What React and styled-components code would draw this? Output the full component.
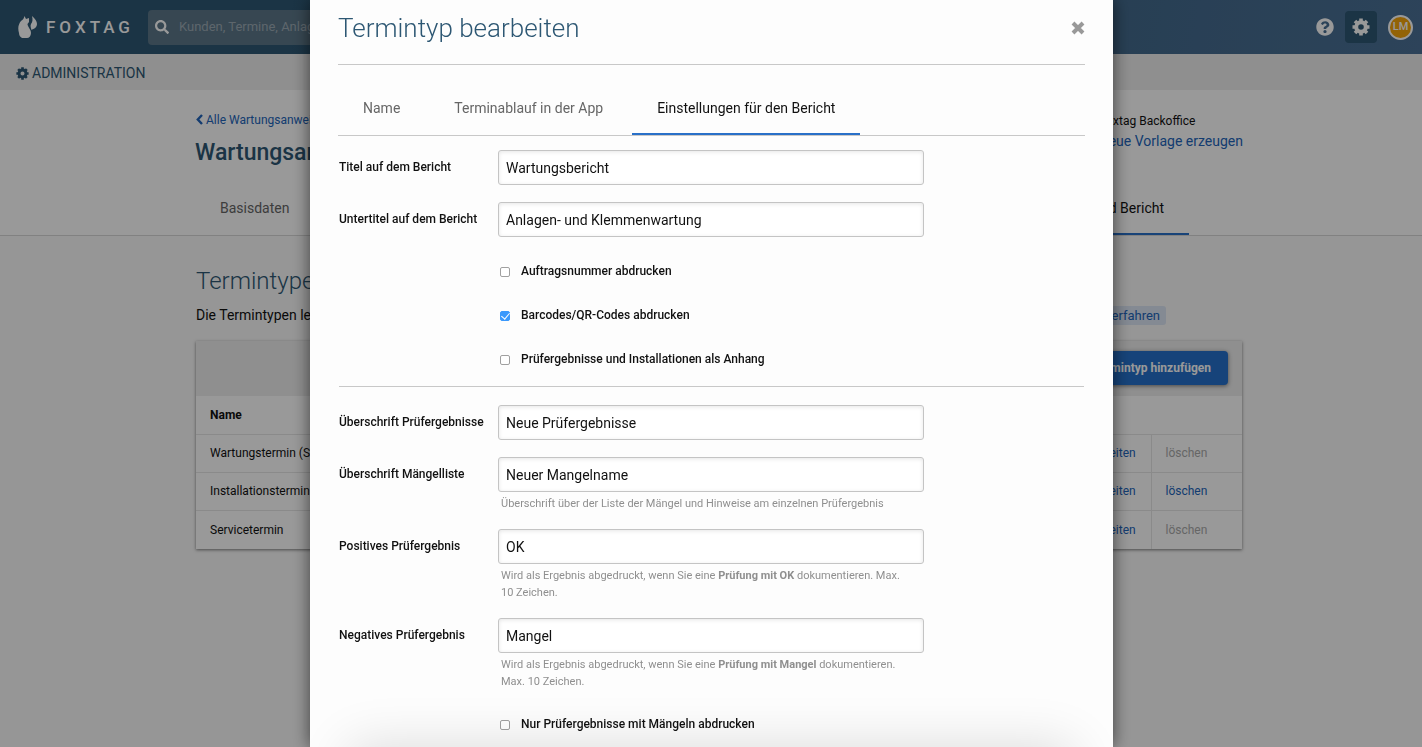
import React from "react";
import styled, { createGlobalStyle } from "styled-components";
import { FaSearch, FaQuestionCircle } from "react-icons/fa";

const GlobalStyle = createGlobalStyle`
  * { box-sizing: border-box; }
  body {
    margin: 0;
    background: #fafafa;
    color: #111;
    font: 14px/20px Roboto, "Liberation Sans", sans-serif;
    overflow: hidden;
  }
  h1, h2, p { margin: 0; }
  a { color: #2265bb; text-decoration: none; }
  button, input { font: inherit; }
`;

const Header = styled.header`
  display: flex;
  align-items: center;
  height: 54px;
  padding: 0 9px 0 18px;
  background: linear-gradient(100deg, #2d5773 20%, #4b7196);
  color: #fff;
`;

const Brand = styled.a`
  display: flex;
  align-items: center;
  gap: 8px;
  width: 130px;
  color: #fff;
  font-size: 17px;
  font-weight: 500;
  letter-spacing: 4px;
`;

const Search = styled.label`
  display: flex;
  align-items: center;
  width: 360px;
  height: 35px;
  padding-left: 7px;
  border-radius: 4px;
  background: #5c7789;
  gap: 10px;
  font-size: 14px;
`;

const SearchInput = styled.input`
  flex: 1;
  min-width: 0;
  border: 0;
  background: transparent;
  outline: 0;
  padding: 0;
  font-size: 13px;
  &::placeholder { color: #9cabb5; opacity: 1; }
`;

const HeaderTools = styled.div`
  display: flex;
  align-items: center;
  gap: 11px;
  margin-left: auto;
`;

const ToolButton = styled.button`
  display: grid;
  place-items: center;
  width: ${(p) => (p.$active ? 32 : 18)}px;
  height: 32px;
  padding: 0;
  border: 0;
  border-radius: 4px;
  background: ${(p) => (p.$active ? "#2d5773" : "transparent")};
  color: #fff;
  font-size: 18px;
`;

const Avatar = styled.button`
  width: 25px;
  height: 25px;
  padding: 0;
  border: 2px solid #fff;
  border-radius: 50%;
  background: #f5a50a;
  color: #fff;
  font-size: 11px;
  font-weight: 500;
  line-height: 20px;
`;

const AdminBar = styled.div`
  display: flex;
  align-items: center;
  gap: 3px;
  height: 36px;
  padding: 2px 16px 0;
  background: #eee;
  color: #2d5773;
`;

const PageHead = styled.section`
  height: 146px;
  padding: 20px 0 0 16px;
  border-bottom: 1px solid #d8d8d8;
  background: #fff;
`;

const PageBody = styled.section`
  padding: 31px 0 40px 16px;
`;

const Container = styled.div`
  width: 100%;
  max-width: 1048px;
  margin: 0 auto;
`;

const BodyContainer = styled(Container)`
  padding: 0 1px;
`;

const Split = styled.div`
  display: flex;
  justify-content: space-between;
`;

const Origin = styled.div`
  padding-top: 1px;
`;

const SmallLine = styled.p`
  font-size: 12px;
  line-height: 20px;
  svg { margin: 0 3px 0 1px; vertical-align: -1px; }
`;

const PageTitle = styled.h1`
  color: #2d5773;
  font-size: 23px;
  font-weight: 500;
  line-height: 46px;
`;

const SectionTitle = styled.h2`
  color: #2d5773;
  font-size: 24px;
  font-weight: 300;
  line-height: 28px;
`;

const Tabs = styled.nav`
  display: flex;
  gap: 4px;
  border-bottom: 1px solid #c8c8c8;
`;

const Tab = styled.a`
  height: 54px;
  padding: 0 25px;
  border-bottom: 2px solid ${(p) => (p.$active ? "#2970c8" : "transparent")};
  color: ${(p) => (p.$active ? "#111" : "#666")};
  line-height: 54px;
`;

const PageTabs = styled(Tabs)`
  justify-content: space-between;
  margin-top: 5px;
  padding-right: 54px;
  border-bottom: 0;
`;

const Intro = styled(Split)`
  align-items: flex-end;
  margin-top: 10px;
  padding-right: 76px;
`;

const LearnMore = styled.a`
  padding: 0 6px;
  border-radius: 3px;
  background: #dce6f5;
  font-size: 13px;
  line-height: 19px;
`;

const Card = styled.div`
  margin-top: 16px;
  background: #fff;
  box-shadow: 0 1px 3px rgba(0, 0, 0, 0.5);
`;

const CardTools = styled.div`
  display: flex;
  justify-content: flex-end;
  height: 55px;
  padding: 10px 14px;
  background: #eee;
`;

const AddButton = styled.button`
  height: 34px;
  padding: 0 17px;
  border: 0;
  border-radius: 4px;
  background: #2671cb;
  box-shadow: 0 1px 4px rgba(0, 0, 0, 0.5);
  color: #fff;
  font-size: 12px;
  font-weight: 700;
`;

const Table = styled.table`
  width: 100%;
  border-collapse: collapse;
  font-size: 12px;
  line-height: 18px;
  th, td {
    height: 38px;
    padding: 0 14px;
    text-align: left;
  }
  td { border-top: 1px solid #e6e6e6; }
  td + td { width: 86px; }
  td + td + td { width: 91px; border-left: 1px solid #e6e6e6; }
  tr:last-child td { height: 39px; }
`;

const Muted = styled.span`
  color: #aaa;
`;

const Overlay = styled.div`
  position: fixed;
  inset: 0;
  display: flex;
  justify-content: center;
  padding-left: 1px;
  background: rgba(0, 0, 0, 0.4);
`;

const Modal = styled.section`
  position: relative;
  width: 100%;
  max-width: 803px;
  padding: 0 28px;
  overflow: hidden;
  background: #fdfdfd;
  box-shadow: 0 0 16px rgba(0, 0, 0, 0.6);
`;

const ModalHead = styled.header`
  display: flex;
  align-items: center;
  justify-content: space-between;
  height: 65px;
  padding-bottom: 9px;
  border-bottom: 1px solid #c8c8c8;
  margin-bottom: 16px;
`;

const ModalTitle = styled.h2`
  color: #2d5773;
  font-size: 26px;
  font-weight: 300;
  line-height: 32px;
`;

const CloseButton = styled.button`
  display: grid;
  padding: 0;
  border: 0;
  background: none;
  color: #999;
`;

const Form = styled.form`
  padding-top: 14px;
`;

const Field = styled.div`
  display: grid;
  grid-template-columns: 160px 426px;
  align-items: start;
  margin-bottom: 17px;
`;

const FieldLabel = styled.label`
  padding-left: 1px;
  font-size: 12px;
  font-weight: 500;
  line-height: 34px;
  white-space: nowrap;
`;

const TextInput = styled.input`
  width: 100%;
  height: 35px;
  padding: 0 7px;
  border: 1px solid #c4c4c4;
  border-radius: 3px;
  background: #fff;
  box-shadow: inset 0 1px 4px rgba(0, 0, 0, 0.1);
  color: #111;
`;

const Hint = styled.p`
  grid-column: 2;
  margin-top: 3px;
  padding: 0 12px 0 3px;
  color: #8f8f8f;
  font-size: 11px;
  line-height: 17px;
`;

const CheckRow = styled.label`
  display: flex;
  align-items: center;
  gap: 11px;
  height: 34px;
  margin: 0 0 10px 162px;
  font-size: 12px;
  font-weight: 500;
`;

const CheckInput = styled.input`
  appearance: none;
  display: grid;
  place-items: center;
  width: 10px;
  height: 10px;
  margin: 2px 0 0;
  border: 1px solid #a0a0a0;
  border-radius: 2px;
  background: #fff;
  &:checked {
    border-color: #3b99fc;
    background: #3b99fc;
  }
  &:checked::after {
    content: "";
    width: 4px;
    height: 7px;
    margin-top: -2px;
    border: solid #fff;
    border-width: 0 1px 1px 0;
    transform: rotate(40deg);
  }
`;

const Rule = styled.hr`
  margin: 0 1px 18px;
  border: 0;
  border-top: 1px solid #c8c8c8;
`;

const FooterBar = styled.div`
  position: absolute;
  top: 100%;
  left: 0;
  right: 0;
  height: 240px;
  box-shadow: 0 -40px 50px -40px rgba(0, 0, 0, 0.14);
  pointer-events: none;
`;

function FoxLogo() {
  return (
    <svg width="20" height="22" viewBox="0 0 20 22" fill="currentColor" aria-hidden="true">
      <path d="M6.5 0 8 3l3-1v4L9.500 8c0 3 3.500 5 3.500 9 0 3-2 5-4 5H4c-2-1-3-3-3-5C-.5 12 .5 8 3 5 5 4 6 2 6.500 0Z" />
      <path d="M14 0c3 3 5 5 5 8 0 4-4 5-5.500 6-.5-2-1.500-4-.5-6 1.500-2 2-4 1-8Z" />
    </svg>
  );
}

const TEETH = [0, 45, 90, 135];

function GearIcon({ size }) {
  return (
    <svg width={size} height={size} viewBox="0 0 18 18" fill="none" stroke="currentColor" aria-hidden="true">
      <circle cx="9" cy="9" r="4.800" strokeWidth="4" />
      {TEETH.map((angle) => (
        <path key={angle} d="M9 .5v2.500M9 15v2.500" strokeWidth="3.600" transform={`rotate(${angle} 9 9)`} />
      ))}
    </svg>
  );
}

function ChevronIcon() {
  return (
    <svg width="7" height="11" viewBox="0 0 7 11" fill="none" stroke="currentColor" strokeWidth="2.400" aria-hidden="true">
      <path d="M6 1 1.800 5.500 6 10" />
    </svg>
  );
}

function CloseIcon() {
  return (
    <svg width="14" height="14" viewBox="0 0 14 14" fill="none" stroke="currentColor" strokeWidth="4" aria-hidden="true">
      <path d="m2 2 10 10M12 2 2 12" />
    </svg>
  );
}

const appointmentTypes = [
  { name: "Wartungstermin (Standard)", removable: false },
  { name: "Installationstermin", removable: true },
  { name: "Servicetermin", removable: false },
];

function TextField({ id, label, value, children }) {
  return (
    <Field>
      <FieldLabel htmlFor={id}>{label}</FieldLabel>
      <TextInput id={id} type="text" defaultValue={value} />
      {children && <Hint>{children}</Hint>}
    </Field>
  );
}

function CheckField({ label, checked }) {
  return (
    <CheckRow>
      <CheckInput type="checkbox" defaultChecked={checked} />
      {label}
    </CheckRow>
  );
}

export default function App() {
  return (
    <>
      <GlobalStyle />
      <Header>
        <Brand href="#">
          <FoxLogo />
          FOXTAG
        </Brand>
        <Search>
          <FaSearch />
          <SearchInput type="search" aria-label="Suche" placeholder="Kunden, Termine, Anlagen" />
        </Search>
        <HeaderTools>
          <ToolButton aria-label="Hilfe"><FaQuestionCircle /></ToolButton>
          <ToolButton $active aria-label="Einstellungen"><GearIcon size={18} /></ToolButton>
          <Avatar>LM</Avatar>
        </HeaderTools>
      </Header>
      <AdminBar><GearIcon size={13} /> ADMINISTRATION</AdminBar>
      <main>
        <PageHead>
          <Container>
            <Split>
              <div>
                <SmallLine><a href="#"><ChevronIcon />Alle Wartungsanweisungen</a></SmallLine>
                <PageTitle>Wartungsanweisung</PageTitle>
              </div>
              <Origin>
                <SmallLine>von Foxtag Backoffice</SmallLine>
                <a href="#">Als neue Vorlage erzeugen</a>
              </Origin>
            </Split>
            <PageTabs>
              <Tab href="#">Basisdaten</Tab>
              <Tab href="#" $active>Termintypen und Bericht</Tab>
            </PageTabs>
          </Container>
        </PageHead>
        <PageBody>
          <BodyContainer>
            <SectionTitle>Termintypen</SectionTitle>
            <Intro>
              <span>Die Termintypen legen den Ablauf fest.</span>
              <LearnMore href="#">Mehr erfahren</LearnMore>
            </Intro>
            <Card>
              <CardTools><AddButton>Termintyp hinzufügen</AddButton></CardTools>
              <Table>
                <thead>
                  <tr><th colSpan={3}>Name</th></tr>
                </thead>
                <tbody>
                  {appointmentTypes.map((t) => (
                    <tr key={t.name}>
                      <td>{t.name}</td>
                      <td><a href="#">bearbeiten</a></td>
                      <td>{t.removable ? <a href="#">löschen</a> : <Muted>löschen</Muted>}</td>
                    </tr>
                  ))}
                </tbody>
              </Table>
            </Card>
          </BodyContainer>
        </PageBody>
      </main>
      <Overlay>
        <Modal role="dialog" aria-modal="true" aria-labelledby="dialog-title">
          <ModalHead>
            <ModalTitle id="dialog-title">Termintyp bearbeiten</ModalTitle>
            <CloseButton aria-label="Schließen"><CloseIcon /></CloseButton>
          </ModalHead>
          <Tabs>
            <Tab href="#">Name</Tab>
            <Tab href="#">Terminablauf in der App</Tab>
            <Tab href="#" $active>Einstellungen für den Bericht</Tab>
          </Tabs>
          <Form>
            <TextField id="title" label="Titel auf dem Bericht" value="Wartungsbericht" />
            <TextField id="subtitle" label="Untertitel auf dem Bericht" value="Anlagen- und Klemmenwartung" />
            <CheckField label="Auftragsnummer abdrucken" />
            <CheckField label="Barcodes/QR-Codes abdrucken" checked />
            <CheckField label="Prüfergebnisse und Installationen als Anhang" />
            <Rule />
            <TextField id="results" label="Überschrift Prüfergebnisse" value="Neue Prüfergebnisse" />
            <TextField id="defects" label="Überschrift Mängelliste" value="Neuer Mangelname">
              Überschrift über der Liste der Mängel und Hinweise am einzelnen Prüfergebnis
            </TextField>
            <TextField id="positive" label="Positives Prüfergebnis" value="OK">
              Wird als Ergebnis abgedruckt, wenn Sie eine <b>Prüfung mit OK</b> dokumentieren. Max. 10 Zeichen.
            </TextField>
            <TextField id="negative" label="Negatives Prüfergebnis" value="Mangel">
              Wird als Ergebnis abgedruckt, wenn Sie eine <b>Prüfung mit Mangel</b> dokumentieren. Max. 10 Zeichen.
            </TextField>
            <CheckField label="Nur Prüfergebnisse mit Mängeln abdrucken" />
          </Form>
          <FooterBar />
        </Modal>
      </Overlay>
    </>
  );
}
